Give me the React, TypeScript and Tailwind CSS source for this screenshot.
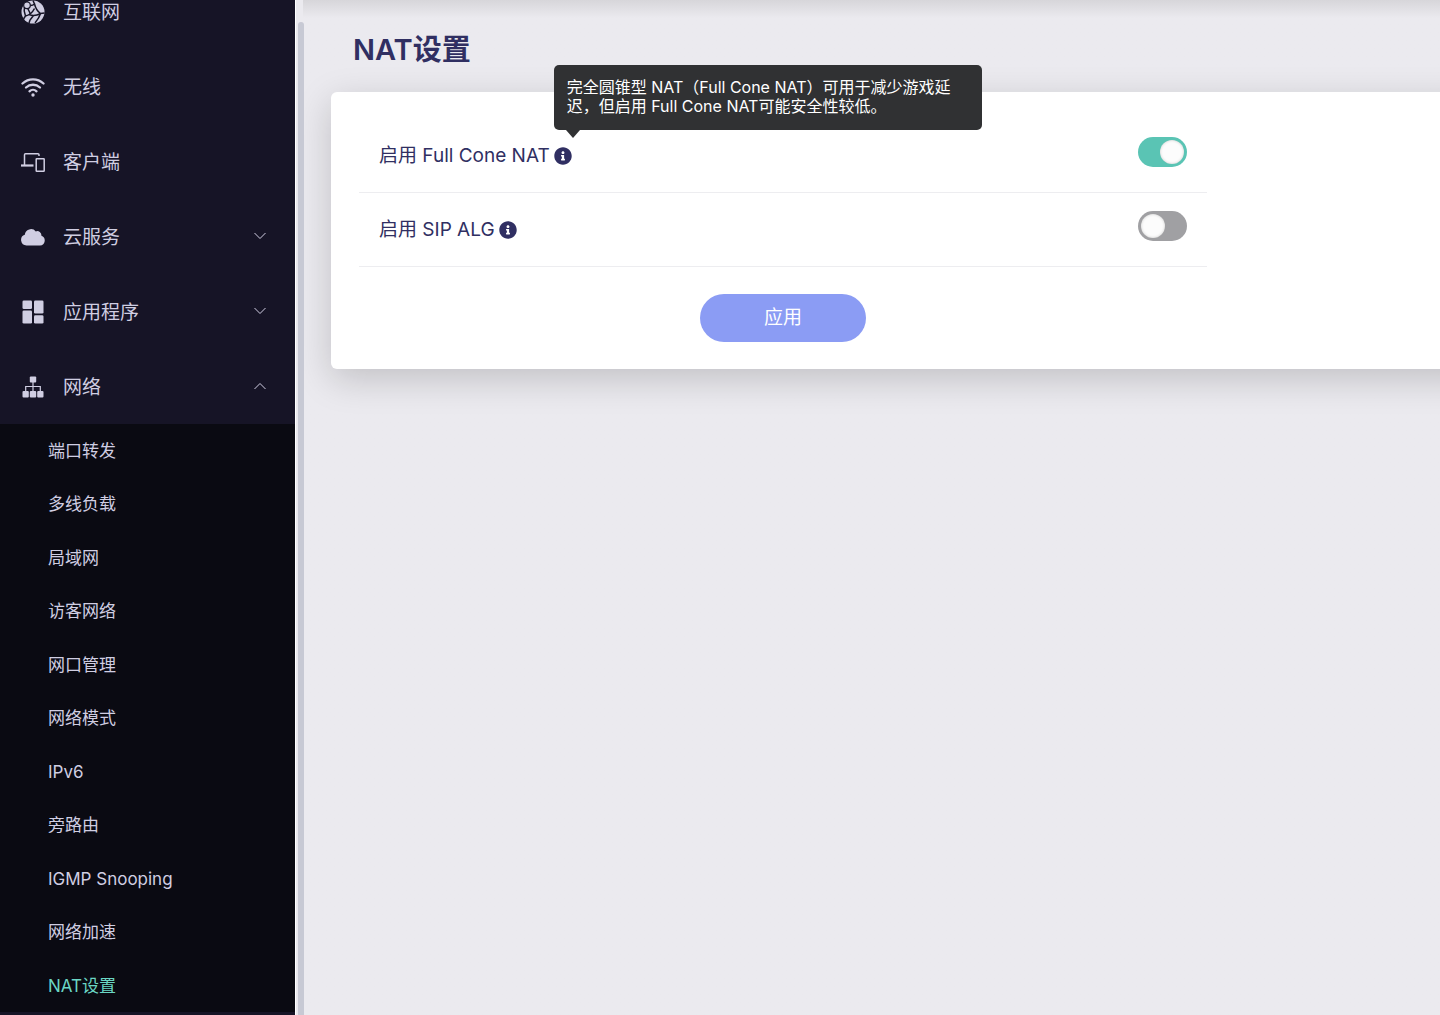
import React, { useState } from "react";
import { FaInfoCircle } from "react-icons/fa";

type IconProps = { className?: string };

function GlobeIcon({ className }: IconProps) {
  return (
    <svg viewBox="0 0 24 24" className={className} fill="none">
      <circle cx="12" cy="12" r="11.5" fill="currentColor" />
      <g stroke="#161426" strokeWidth="1.5">
        <path d="M8.500 5.500c2 .2 3.500 0 5-1.500L12 .5M13.500 4c1 4 3 7.500 6 9.500l4-.5" />
        <path d="M3.500 7c-.8 3-.3 6 1 9l-2 3M4.500 16c4-1 7-3.500 9-7.500" />
        <path d="M8 14.500c3 1.300 7 1.500 11.500-1M12.500 15.500 9 20l-1 3M19.500 13.500c-1 3.500-3 6.500-5.500 9.500M6.500 8l3 6" />
      </g>
      <circle cx="6" cy="5.300" r="3.300" fill="currentColor" stroke="#161426" strokeWidth="1.200" />
    </svg>
  );
}

function WifiIcon({ className }: IconProps) {
  return (
    <svg viewBox="0 0 24 24" className={className} fill="none" stroke="currentColor" strokeWidth="2.300" strokeLinecap="round">
      <path d="M1.500 8.500c6-5.500 15-5.500 21 0" />
      <path d="M5 12.500c4-3.700 10-3.700 14 0" />
      <path d="M8.500 16.300c2-1.900 5-1.900 7 0" />
      <circle cx="12" cy="20" r="1.700" fill="currentColor" stroke="none" />
    </svg>
  );
}

function DevicesIcon({ className }: IconProps) {
  return (
    <svg viewBox="0 0 24 24" className={className} fill="none" stroke="currentColor" strokeWidth="1.500">
      <path d="M3.500 15V4.700c0-.6.400-1 1-1h12.500c.6 0 1 .4 1 1v1.300" />
      <path d="M0 15.500h12.500" strokeWidth="2.200" />
      <rect x="15.200" y="8.700" width="8" height="12.600" rx=".6" />
    </svg>
  );
}

function CloudIcon({ className }: IconProps) {
  return (
    <svg viewBox="0 0 24 24" className={className} fill="currentColor">
      <path d="M5.500 20.500a5.500 5.500 0 0 1-1.700-10.700A6.200 6.200 0 0 1 14.800 6.400a4.200 4.200 0 0 1 5.600 4.400A5 5 0 0 1 19 20.500Z" />
    </svg>
  );
}

function AppsIcon({ className }: IconProps) {
  return (
    <svg viewBox="0 0 24 24" className={className} fill="currentColor">
      <rect x="1.500" y=".5" width="9.500" height="8.500" rx="1.300" />
      <rect x="13" y=".5" width="9.500" height="13" rx="1.300" />
      <rect x="1.500" y="10.500" width="9.500" height="13" rx="1.300" />
      <rect x="13" y="15.200" width="9.500" height="8.300" rx="1.300" />
    </svg>
  );
}

function NetworkIcon({ className }: IconProps) {
  return (
    <svg viewBox="0 0 24 24" className={className} fill="currentColor">
      <rect x="8.800" y="1.500" width="6.400" height="6" rx="1" />
      <rect x="1.500" y="16" width="6.300" height="6.500" rx="1" />
      <rect x="8.800" y="16" width="6.400" height="6.500" rx="1" />
      <rect x="16.200" y="16" width="6.300" height="6.500" rx="1" />
      <path d="M12 7v9M4.700 16v-4.500h14.600V16" fill="none" stroke="currentColor" strokeWidth="1.200" />
    </svg>
  );
}

function Chevron({ up }: { up?: boolean }) {
  return (
    <svg viewBox="0 0 12 7" className="w-3 h-2 mb-0.5" fill="none" stroke="currentColor" strokeWidth="1">
      <path d={up ? "M.5 6.500 6 1l5.500 5.500" : "M.5.5 6 6 11.500.5"} />
    </svg>
  );
}

const menu = [
  { label: "互联网", icon: GlobeIcon },
  { label: "无线", icon: WifiIcon },
  { label: "客户端", icon: DevicesIcon },
  { label: "云服务", icon: CloudIcon, expandable: true },
  { label: "应用程序", icon: AppsIcon, expandable: true },
  { label: "网络", icon: NetworkIcon, expandable: true, open: true },
];

const submenu = [
  "端口转发", "多线负载", "局域网", "访客网络", "网口管理", "网络模式",
  "IPv6", "旁路由", "IGMP Snooping", "网络加速", "NAT设置",
];

function Sidebar() {
  return (
    <aside className="relative z-10 w-[295px] shrink-0 h-screen overflow-hidden bg-[#161426] text-[#d0cee2]">
      <nav className="-mt-[26px]">
        {menu.map(({ label, icon: Icon, expandable, open }) => (
          <button key={label} aria-expanded={expandable ? !!open : undefined} className="w-full h-[75px] pl-[21px] pr-[29px] flex items-center text-left text-[19px]">
            <Icon className="w-6 h-6 mr-[18px] shrink-0" />
            <span className="flex-1 pt-1">{label}</span>
            {expandable && <Chevron up={open} />}
          </button>
        ))}
        <div className="h-[588px] grid auto-rows-fr bg-[#0a0a12] text-[17px]">
          {submenu.map((label) => (
            <a key={label} href="#" className={label === "NAT设置" ? "pl-12 pt-0.5 flex items-center text-[#6ad6c4]" : "pl-12 pt-0.5 flex items-center"}>
              {label}
            </a>
          ))}
        </div>
      </nav>
    </aside>
  );
}

type RowProps = {
  id: string;
  label: string;
  checked: boolean;
  onChange: (v: boolean) => void;
  tip?: string;
};

function SettingRow({ id, label, checked, onChange, tip }: RowProps) {
  return (
    <div className="h-[74px] pl-5 pr-5 flex items-center justify-between border-b border-[#ededf0]">
      <div className="flex items-center gap-1 text-[19px] text-[#302f62]">
        <label htmlFor={id} className="pt-0.5">{label}</label>
        <span className="relative">
          <FaInfoCircle className="w-[18px] h-[18px]" />
          {tip && (
            <span role="tooltip" className="absolute left-0 bottom-full mb-[17px] w-[428px] h-[65px] px-[13px] pt-[13px] rounded-[5px] bg-[#303133] text-white text-[16px] leading-[19px]">
              {tip}
              <span className="absolute left-3 top-full w-0 h-0 border-x-[7px] border-x-transparent border-t-[8px] border-t-[#303133]" />
            </span>
          )}
        </span>
      </div>
      <label className="relative block w-[49px] h-[30px] mb-2 cursor-pointer">
        <input
          id={id}
          type="checkbox"
          role="switch"
          className="peer sr-only"
          checked={checked}
          onChange={(e) => onChange(e.target.checked)}
        />
        <span className="block h-full rounded-full bg-[#a0a0a3] peer-checked:bg-[#5ac4b4]" />
        <span className="absolute top-[3px] left-[3px] w-6 h-6 rounded-full bg-[#fcfcfc] shadow-[inset_0_0_3px_rgba(0,0,0,0.2)] peer-checked:left-[22px]" />
      </label>
    </div>
  );
}

export default function App() {
  const [fullCone, setFullCone] = useState(true);
  const [sipAlg, setSipAlg] = useState(false);

  return (
    <div className="flex h-screen overflow-hidden bg-[#ebeaef] font-['Inter','Noto_Sans_CJK_SC',sans-serif]">
      <Sidebar />
      <div className="relative z-10 w-2 shrink-0 pt-[22px] pl-0.5 border-l border-white">
        <div className="h-full w-1.5 rounded-t-full bg-[#c7c9d4]" />
      </div>
      <main className="flex-1 min-w-0 pl-7 bg-linear-to-b from-[#d7d6da] to-[#ebeaef] to-[18px]">
        <h1 className="pl-[22px] pt-[29px] h-[92px] text-[29px] leading-[42px] font-semibold text-[#302f62]">NAT设置</h1>
        <section className="-mr-12 rounded-md bg-white pt-[27px] pb-[27px] pl-7 shadow-[0_10px_36px_rgba(0,0,0,0.18)]">
          <form className="w-[848px] max-w-full" onSubmit={(e) => e.preventDefault()}>
            <SettingRow
              id="full-cone"
              label="启用 Full Cone NAT"
              checked={fullCone}
              onChange={setFullCone}
              tip="完全圆锥型 NAT（Full Cone NAT）可用于减少游戏延迟，但启用 Full Cone NAT可能安全性较低。"
            />
            <SettingRow id="sip-alg" label="启用 SIP ALG" checked={sipAlg} onChange={setSipAlg} />
            <button type="submit" className="block mx-auto mt-[27px] w-[166px] h-12 rounded-full bg-[#8b9cf4] text-white text-[19px]">
              应用
            </button>
          </form>
        </section>
      </main>
    </div>
  );
}
